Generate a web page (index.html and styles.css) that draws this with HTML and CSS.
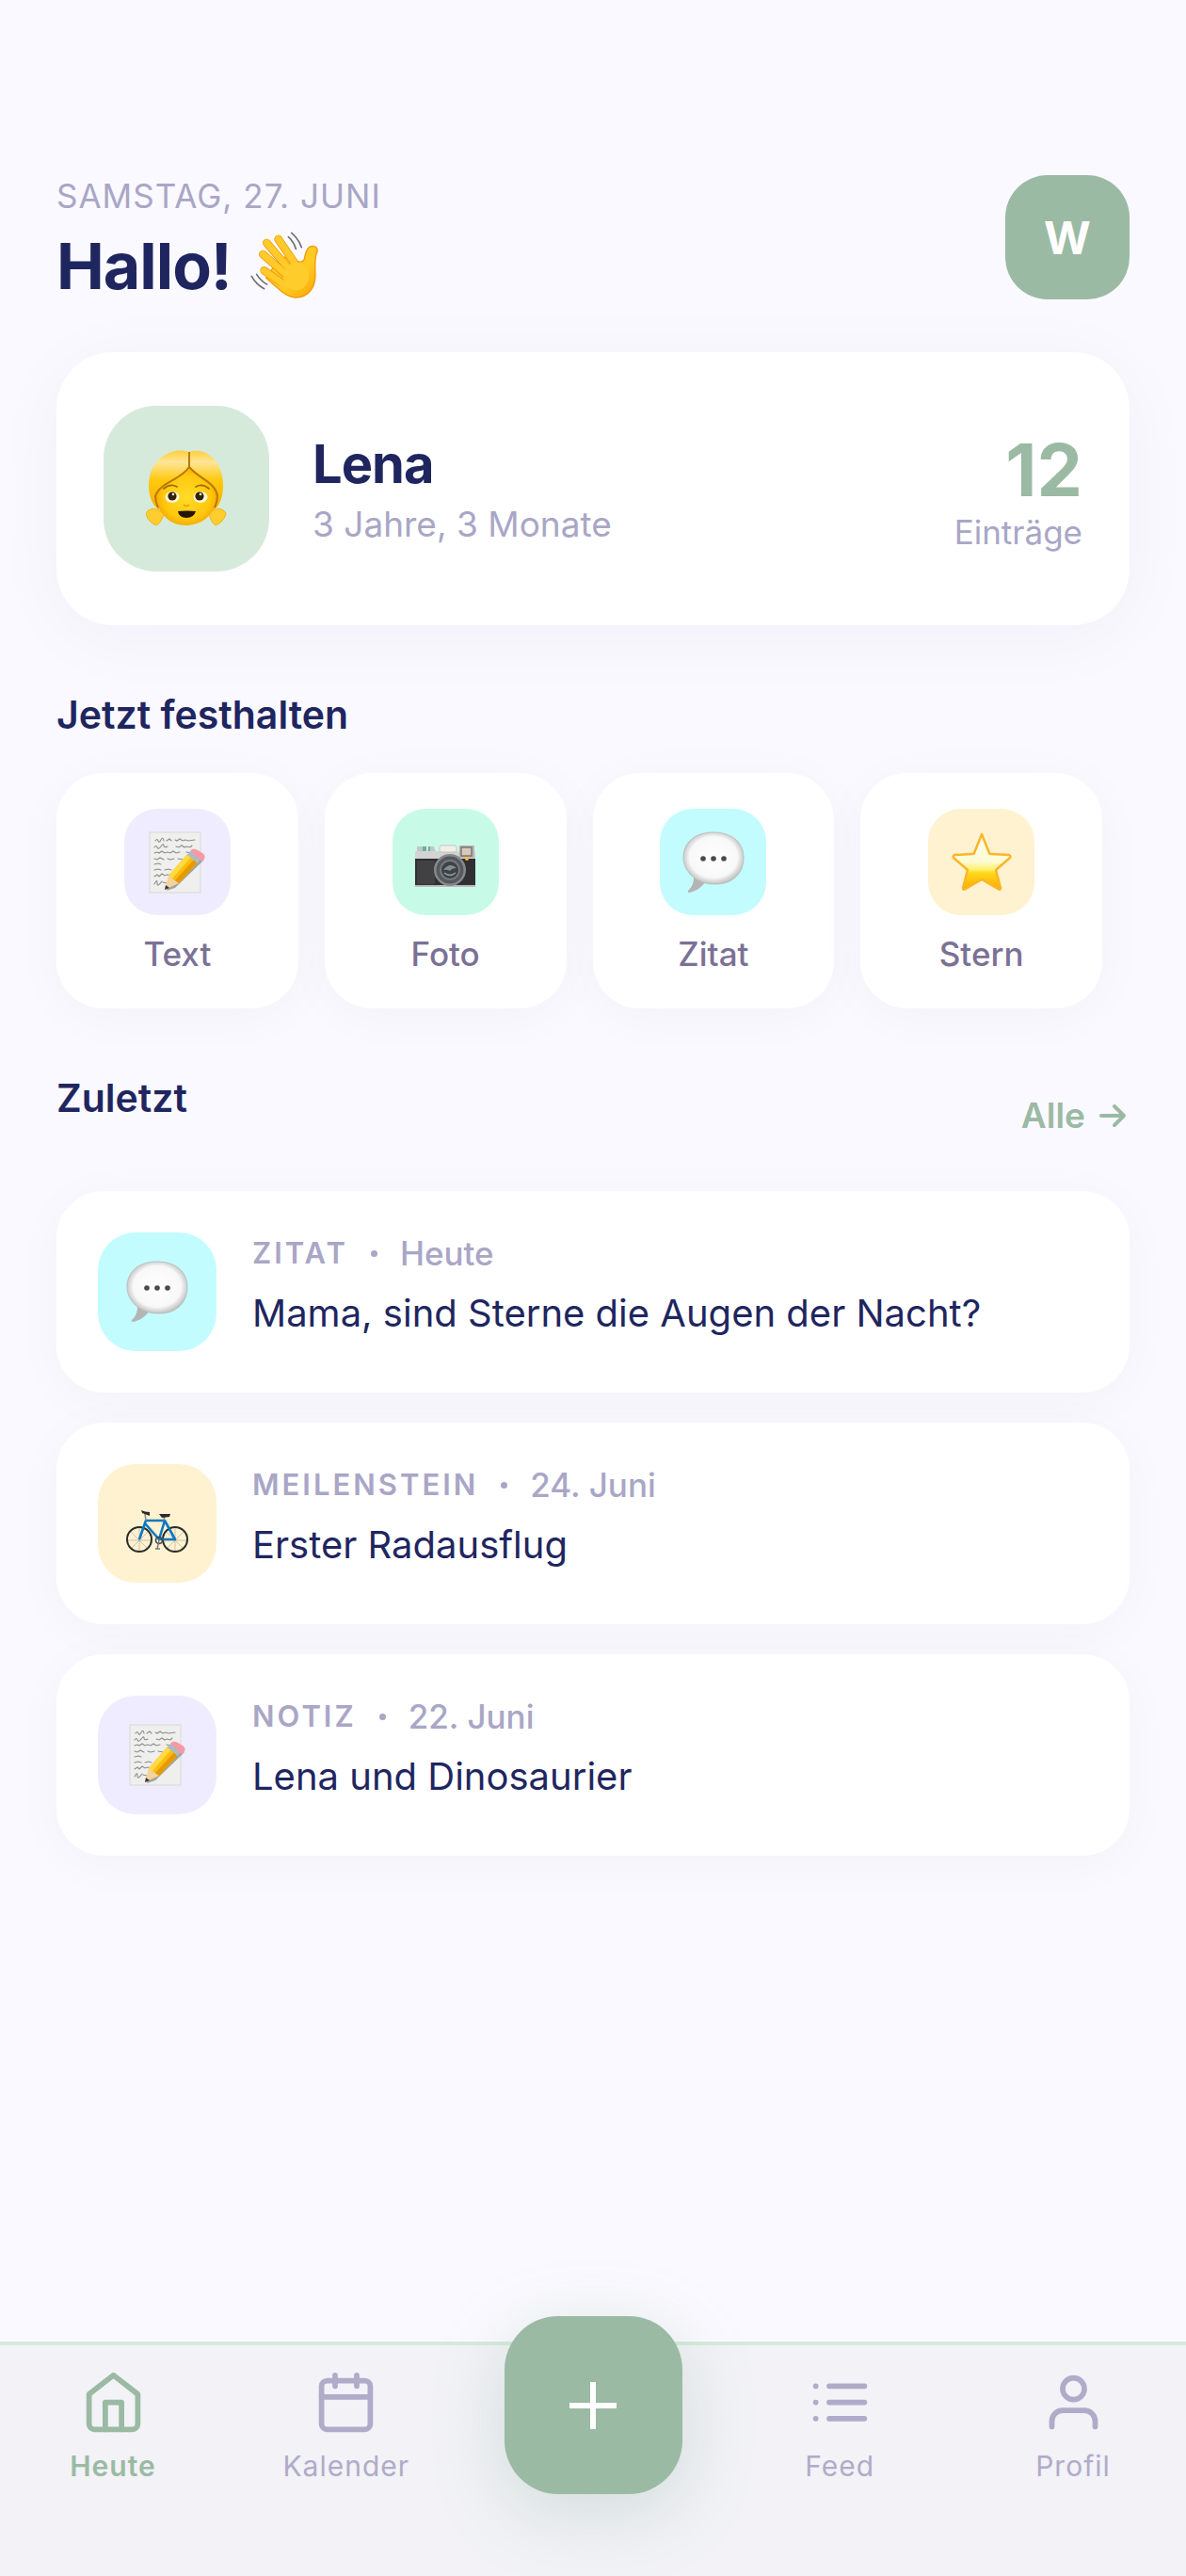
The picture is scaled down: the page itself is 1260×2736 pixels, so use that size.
FILE: index.html
```
<!DOCTYPE html>
<html lang="de">
<head>
    <meta charset="UTF-8">
    <meta name="viewport" content="width=device-width, initial-scale=1.0">
    <title>Heute</title>
    <link rel="stylesheet" href="styles.css">
</head>
<body>
    <!-- Symbole, die mehrfach verwendet werden -->
    <svg class="sprite" aria-hidden="true">
        <defs>
            <linearGradient id="gelb" x1="0" y1="0" x2="1" y2="1">
                <stop offset="0" stop-color="#ffd02e"/>
                <stop offset="0.6" stop-color="#ffc921"/>
                <stop offset="1" stop-color="#fba405"/>
            </linearGradient>
            <linearGradient id="haar" x1="0" y1="0" x2="0" y2="1">
                <stop offset="0" stop-color="#ffcf3a"/>
                <stop offset="0.2" stop-color="#ffe597"/>
                <stop offset="0.5" stop-color="#ffc90f"/>
                <stop offset="1" stop-color="#f5ae00"/>
            </linearGradient>
            <radialGradient id="gesicht" cx="0.5" cy="0.5" r="0.55">
                <stop offset="0" stop-color="#ffdc2a"/>
                <stop offset="0.7" stop-color="#ffc80d"/>
                <stop offset="1" stop-color="#f3a300"/>
            </radialGradient>
            <radialGradient id="blase" cx="0.5" cy="0.48" r="0.53">
                <stop offset="0" stop-color="#ffffff"/>
                <stop offset="0.75" stop-color="#f8f8f8"/>
                <stop offset="1" stop-color="#bdbdbd"/>
            </radialGradient>
            <linearGradient id="stern" x1="0" y1="0" x2="0" y2="1">
                <stop offset="0" stop-color="#fffdf0"/>
                <stop offset="0.5" stop-color="#fffbd2"/>
                <stop offset="0.64" stop-color="#fff06a"/>
                <stop offset="0.7" stop-color="#ffd91a"/>
                <stop offset="1" stop-color="#ffa800"/>
            </linearGradient>
        </defs>
        <symbol id="notiz" viewBox="0 0 66 66">
            <rect x="4" y="1" width="54" height="64" fill="#efefed" stroke="#d8d8d6" stroke-width="1"/>
            <g fill="none" stroke="#8c8c8f" stroke-width="1.1" stroke-linecap="round">
                <path d="M10 10q2-3 3 0t3-1 3 1M22 10l3-2 2 2M31 9l2 1 3-2 3 2 3-1 3 1 7-1"/>
                <path d="M9 17q2-3 3 0t4-1 3-1 4 1M32 16l3 1 3-2 3 2 2-1 4 1 2-2"/>
                <path d="M9 23l3-1 2 1 3-2 3 2 3-1 3 1 3-2 3 2 4-1M43 22l4 1"/>
                <path d="M9 29l3 1 3-2 4 2M23 29l3 1 4-1M34 29l6 1"/>
                <path d="M9 35l4-1 3 1"/>
                <path d="M9 41l4-1 3 1M20 41l4-1 3 1M32 40l3 1"/>
                <path d="M9 48l3-2 2 2 3-3 3 2 3-1 5 1"/>
                <path d="M9 56q3-6 3-1t5-2M18 54l4 1"/>
            </g>
            <path d="M22 63l9-3 31-30-4-4-34 28z" fill="#444" opacity="0.45"/>
            <path d="M20 62l4-15 11 8z" fill="#f5d39c"/>
            <path d="M20 62l1-5 4 3z" fill="#35353a"/>
            <path d="M24 47l20-23 11 9-20 22z" fill="#fdbd0c"/>
            <path d="M24 47l20-23 4 3-20 23z" fill="#ffda45"/>
            <path d="M31 52l20-22 4 3-20 22z" fill="#e79a00"/>
            <path d="M44 25l3-4 12 8-4 5z" fill="#a9bdc9"/>
            <path d="M47 21l2-2q3-1 6 1l5 3q4 3 2 6l-3 3z" fill="#f59aa3"/>
        </symbol>
        <symbol id="zitat" viewBox="0 0 66 66">
            <path d="M12 46Q13 57 6 63Q5 65 8 65Q19 62 25 53z" fill="#b4b4b4"/>
            <path d="M33 1C52 1 65 11 65 28S53 56 36 56C31 56 28 56 25 55C20 54 11 50 7 44C3 39 1 34 1 28C1 11 14 1 33 1z" fill="url(#blase)" stroke="#b9b9b9" stroke-width="0.8"/>
            <g fill="#4a4a4a">
                <circle cx="22" cy="29" r="2.8"/>
                <circle cx="33" cy="29" r="2.8"/>
                <circle cx="44" cy="29" r="2.8"/>
            </g>
        </symbol>
    </svg>

    <main class="inhalt">
        <header class="kopf">
            <div>
                <p class="datum">SAMSTAG, 27. JUNI</p>
                <h1 class="hallo">Hallo!
                    <svg class="winken" viewBox="0 0 216 216" role="img" aria-label="Winkende Hand">
                        <g fill="none" stroke="#707070" stroke-width="5" stroke-linecap="round">
                            <path d="M131 4q22 18 32 46M121 17q17 14 24 38M4 142q14 26 40 40M20 136q14 22 33 32"/>
                        </g>
                        <path d="M96 80L138 86Q164 106 172 88C176 60 184 46 198 46C211 46 216 56 212 66C203 90 207 110 207 142C206 184 180 211 142 210C120 209 104 196 88 181L50 148z" fill="url(#gelb)" stroke="#f29a06" stroke-width="4" stroke-linejoin="round"/>
                        <g fill="none" stroke-linecap="round">
                            <path d="M89 24L142 102" stroke="#f19a0b" stroke-width="26"/>
                            <path d="M89 24L146 108" stroke="#ffcb2a" stroke-width="21"/>
                            <path d="M52 36L122 118" stroke="#f19a0b" stroke-width="26"/>
                            <path d="M52 36L128 124" stroke="#ffcb2a" stroke-width="21"/>
                            <path d="M40 72L110 134" stroke="#f19a0b" stroke-width="26"/>
                            <path d="M40 72L118 140" stroke="#ffcb2a" stroke-width="21"/>
                            <path d="M44 124L96 160" stroke="#f19a0b" stroke-width="26"/>
                            <path d="M44 124L112 172" stroke="#ffcb2a" stroke-width="21"/>
                        </g>
                        <ellipse cx="146" cy="142" rx="40" ry="44" fill="#ffcd2b"/>
                    </svg>
                </h1>
            </div>
            <button class="avatar" type="button">W</button>
        </header>

        <section class="kind">
            <div class="kind-bild">
                <svg viewBox="0 0 86 82" role="img" aria-label="Mädchen">
                    <path d="M8 62Q0 64 0 68Q3 77 11 80Q18 76 19 66z" fill="#ffce2e" stroke="#eda900" stroke-width="0.8"/>
                    <path d="M77 62Q85 64 85 68Q82 77 74 80Q68 76 67 66z" fill="#ffce2e" stroke="#eda900" stroke-width="0.8"/>
                    <path d="M46 2C60-3 82 7 82 38C82 49 79 58 73 63L13 63C6 57 3 48 3 38C3 7 30-4 46 2z" fill="url(#haar)"/>
                    <path d="M46 20C58 30 74 34 76 49C75 66 61 80 43 80S12 67 11 49C12 35 35 33 46 20z" fill="url(#gesicht)"/>
                    <path d="M46 2V18C37 32 15 34 10 49Q10 55 13 61M46 18C57 31 74 34 76 49Q76 55 73 61" fill="none" stroke="#b97900" stroke-width="2"/>
                    <path d="M19 41q7-6 14-2M53 39q7-4 14 2" fill="none" stroke="#a36a00" stroke-width="1.8" stroke-linecap="round"/>
                    <ellipse cx="28" cy="50" rx="7.5" ry="6" fill="#fff7dc"/>
                    <ellipse cx="58" cy="50" rx="7.5" ry="6" fill="#fff7dc"/>
                    <circle cx="28" cy="49" r="4.6" fill="#332000"/>
                    <circle cx="57" cy="49" r="4.6" fill="#332000"/>
                    <circle cx="29" cy="47" r="1.3" fill="#fff"/>
                    <circle cx="58" cy="47" r="1.3" fill="#fff"/>
                    <path d="M40 58q3 3 6 0" fill="none" stroke="#e89c00" stroke-width="1.5"/>
                    <path d="M34 65Q43 64 53 65Q51 72 43 72T34 65z" fill="#251500"/>
                </svg>
            </div>
            <div class="kind-text">
                <h2>Lena</h2>
                <p>3 Jahre, 3 Monate</p>
            </div>
            <div class="kind-zahl">
                <strong>12</strong>
                <span>Einträge</span>
            </div>
        </section>

        <h2 class="titel">Jetzt festhalten</h2>
        <div class="schnell">
            <button class="schnell-karte" type="button">
                <span class="symbol lila"><svg aria-hidden="true"><use href="#notiz"/></svg></span>
                Text
            </button>
            <button class="schnell-karte" type="button">
                <span class="symbol mint">
                    <svg viewBox="0 0 66 66" aria-hidden="true">
                        <path d="M3 22V16h9v6zM14 22l1-6h6l2 6z" fill="#c3c6c6"/>
                        <path d="M9 16h4v5H9zM15 16h2v5h-2z" fill="#6fae97"/>
                        <rect x="1" y="21" width="64" height="9" rx="1" fill="#d2d4d4"/>
                        <rect x="27" y="15" width="18" height="7" rx="2" fill="#f3efe6" stroke="#bbb" stroke-width="0.8"/>
                        <rect x="1" y="29" width="64" height="29" fill="#303033"/>
                        <rect x="3" y="31" width="19" height="25" fill="#414144"/>
                        <path d="M1 57h64v2H1z" fill="#b9b9bb"/>
                        <rect x="48" y="15" width="16" height="13" fill="#b5b5b5"/>
                        <rect x="50" y="17" width="11" height="9" fill="#d7c8c0" stroke="#74615b" stroke-width="1.2"/>
                        <circle cx="38" cy="41" r="17" fill="#85898d"/>
                        <circle cx="38" cy="41" r="14.5" fill="#55595d"/>
                        <circle cx="38" cy="41" r="11" fill="#73797d"/>
                        <circle cx="38" cy="41" r="9" fill="#3c4246"/>
                        <path d="M31 41q7-9 14-2-5 0-7 3-3-2-7-1z" fill="#858d91"/>
                        <path d="M32 44q6 5 12 0" fill="none" stroke="#9ba2a6" stroke-width="1.3"/>
                        <circle cx="56" cy="29" r="2" fill="#ffc52b"/>
                    </svg>
                </span>
                Foto
            </button>
            <button class="schnell-karte" type="button">
                <span class="symbol cyan"><svg aria-hidden="true"><use href="#zitat"/></svg></span>
                Zitat
            </button>
            <button class="schnell-karte" type="button">
                <span class="symbol gelb">
                    <svg viewBox="0 0 66 66" aria-hidden="true">
                        <path d="M33 3L41 23Q41 24 43 24L62 25Q64 26 63 28L48 41L53 60Q53 63 50 61L33 51L16 61Q13 63 13 60L18 41L3 28Q2 26 4 25L23 24Q25 24 25 23z" fill="url(#stern)" stroke="#fbb52a" stroke-width="2.5" stroke-linejoin="round"/>
                    </svg>
                </span>
                Stern
            </button>
        </div>

        <div class="titel-zeile">
            <h2 class="titel">Zuletzt</h2>
            <a class="alle" href="#">Alle
                <svg viewBox="0 0 30 26" aria-hidden="true"><path d="M3 13h24M17 3l10 10-10 10"/></svg>
            </a>
        </div>
        <div class="liste">
            <article class="eintrag">
                <span class="symbol gross cyan"><svg aria-hidden="true"><use href="#zitat"/></svg></span>
                <div>
                    <p class="meta"><b>ZITAT</b><i class="punkt"></i><span>Heute</span></p>
                    <h3>Mama, sind Sterne die Augen der Nacht?</h3>
                </div>
            </article>
            <article class="eintrag">
                <span class="symbol gross gelb">
                    <svg viewBox="0 0 66 66" aria-hidden="true">
                        <g fill="none" stroke="#a8a293" stroke-width="0.6">
                            <path d="M14 38v26M1 51h26M5 42l18 18M23 42L5 60M52 38v26M39 51h26M43 42l18 18M61 42L43 60"/>
                        </g>
                        <g fill="none" stroke="#2c2c2c" stroke-width="2">
                            <circle cx="14" cy="50" r="13"/>
                            <circle cx="52" cy="50" r="13"/>
                        </g>
                        <path d="M14 50l7-20h20l-6 20-15-17M35 50h17L41 30" fill="none" stroke="#0878c4" stroke-width="2.6" stroke-linejoin="round"/>
                        <path d="M21 30l-1-7M40 30l1-6" stroke="#8b8b8b" stroke-width="1.6"/>
                        <path d="M16 19q4 2 9 2v4l-8-3zM35 23h12l-1 3-8 1z" fill="#2b2b2b"/>
                        <circle cx="35" cy="51" r="3.5" fill="none" stroke="#444" stroke-width="1.6"/>
                        <path d="M35 51l-2 9M31 60h5" stroke="#777" stroke-width="1.4"/>
                    </svg>
                </span>
                <div>
                    <p class="meta"><b>MEILENSTEIN</b><i class="punkt"></i><span>24. Juni</span></p>
                    <h3>Erster Radausflug</h3>
                </div>
            </article>
            <article class="eintrag">
                <span class="symbol gross lila"><svg aria-hidden="true"><use href="#notiz"/></svg></span>
                <div>
                    <p class="meta"><b>NOTIZ</b><i class="punkt"></i><span>22. Juni</span></p>
                    <h3>Lena und Dinosaurier</h3>
                </div>
            </article>
        </div>
    </main>

    <nav class="leiste">
        <a class="tab aktiv" href="#">
            <svg viewBox="0 0 24 24" aria-hidden="true"><path d="M3 9l9-7 9 7v11a2 2 0 0 1-2 2H5a2 2 0 0 1-2-2z"/><path d="M9 22V12h6v10"/></svg>
            Heute
        </a>
        <a class="tab" href="#">
            <svg viewBox="0 0 24 24" aria-hidden="true"><rect x="3" y="4" width="18" height="18" rx="2"/><path d="M16 2v4M8 2v4M3 10h18"/></svg>
            Kalender
        </a>
        <button class="plus" type="button" aria-label="Neuer Eintrag">
            <svg viewBox="0 0 50 50" aria-hidden="true"><path d="M25 0v50M0 25h50"/></svg>
        </button>
        <a class="tab" href="#">
            <svg viewBox="0 0 24 24" aria-hidden="true"><path d="M8 6h13M8 12h13M8 18h13M3 6h.01M3 12h.01M3 18h.01"/></svg>
            Feed
        </a>
        <a class="tab" href="#">
            <svg viewBox="0 0 24 24" aria-hidden="true"><path d="M20 21v-2a4 4 0 0 0-4-4H8a4 4 0 0 0-4 4v2"/><circle cx="12" cy="7" r="4"/></svg>
            Profil
        </a>
    </nav>
</body>
</html>
```
FILE: styles.css
```
* {
    box-sizing: border-box;
}
body {
    margin: 0;
    min-height: 100vh;
    display: flex;
    flex-direction: column;
    font-family: Inter, "Liberation Sans", sans-serif;
    background-color: #faf9ff;
    color: #1f265f;
}
h1, h2, h3, p {
    margin: 0;
}
button {
    font-family: inherit;
    border: none;
    padding: 0;
}
a {
    text-decoration: none;
}
.sprite {
    position: absolute;
    width: 0;
    height: 0;
}
.inhalt {
    flex: 1;
    padding: 186px 60px 60px;
}

/* Kopfzeile */
.kopf {
    display: flex;
    justify-content: space-between;
    align-items: flex-start;
    margin-bottom: 52px;
}
.datum {
    font-size: 35px;
    line-height: 44px;
    letter-spacing: 1px;
    color: #a9a6c6;
    margin-bottom: 12px;
}
.hallo {
    display: flex;
    align-items: center;
    gap: 20px;
    font-size: 68px;
    line-height: 80px;
    letter-spacing: -1px;
    font-weight: 700;
}
.winken {
    width: 72px;
    height: 72px;
}
.avatar {
    width: 132px;
    height: 132px;
    border-radius: 45px;
    background-color: #9bbaa3;
    color: #fff;
    font-size: 48px;
    font-weight: 700;
}

/* Karte des Kindes */
.kind {
    display: flex;
    align-items: center;
    gap: 46px;
    padding: 57px 50px;
    border-radius: 60px;
    background-color: #fff;
    box-shadow: 0 12px 80px rgba(31, 38, 95, 0.04);
}
.kind-bild {
    display: flex;
    align-items: center;
    justify-content: center;
    width: 176px;
    height: 176px;
    border-radius: 56px;
    background-color: #d6eadc;
}
.kind-bild svg {
    width: 86px;
    height: 82px;
}
.kind-text {
    flex: 1;
}
.kind-text h2 {
    font-size: 56px;
    line-height: 70px;
    font-weight: 700;
    letter-spacing: -1px;
}
.kind-text p {
    margin-top: 6px;
    font-size: 37px;
    line-height: 46px;
    color: #a9a6c6;
}
.kind-zahl {
    display: flex;
    flex-direction: column;
    align-items: flex-end;
    padding-top: 4px;
}
.kind-zahl strong {
    font-size: 77px;
    line-height: 88px;
    color: #9bbaa3;
}
.kind-zahl span {
    font-size: 35px;
    line-height: 44px;
    color: #a9a6c6;
}

.titel {
    margin: 71px 0 38px;
    font-size: 41px;
    line-height: 48px;
    font-weight: 600;
}

/* Schnellauswahl */
.schnell {
    display: grid;
    grid-template-columns: repeat(4, 1fr);
    gap: 28px;
    padding-right: 29px;
}
.schnell-karte {
    display: flex;
    flex-direction: column;
    align-items: center;
    gap: 19px;
    padding: 38px 0 36px;
    border-radius: 50px;
    background-color: #fff;
    box-shadow: 0 8px 56px rgba(31, 38, 95, 0.03);
    color: #7b7196;
    font-size: 35px;
    line-height: 44px;
    font-weight: 500;
}
.symbol {
    display: flex;
    align-items: center;
    justify-content: center;
    flex: none;
    width: 113px;
    height: 113px;
    border-radius: 35px;
}
.symbol svg {
    width: 66px;
    height: 66px;
}
.gross {
    width: 126px;
    height: 126px;
    border-radius: 40px;
}
.lila {
    background-color: #f0ecff;
}
.mint {
    background-color: #c7fbe8;
}
.cyan {
    background-color: #c2fcff;
}
.gelb {
    background-color: #fff2d0;
}

/* Letzte Einträge */
.titel-zeile {
    display: flex;
    justify-content: space-between;
    align-items: center;
    margin: 71px 0 37px;
}
.titel-zeile .titel {
    margin-top: 0;
}
.alle {
    display: flex;
    align-items: center;
    gap: 14px;
    padding-right: 3px;
    font-size: 37px;
    line-height: 48px;
    font-weight: 600;
    color: #9bbaa3;
}
.alle svg {
    width: 30px;
    height: 26px;
    fill: none;
    stroke: currentColor;
    stroke-width: 4;
    stroke-linecap: round;
    stroke-linejoin: round;
}
.liste {
    display: flex;
    flex-direction: column;
    gap: 32px;
}
.eintrag {
    display: flex;
    gap: 38px;
    padding: 44px;
    border-radius: 50px;
    background-color: #fff;
    box-shadow: 0 8px 56px rgba(31, 38, 95, 0.03);
}
.meta {
    display: flex;
    align-items: center;
    gap: 24px;
    margin-bottom: 12px;
    font-size: 35px;
    line-height: 44px;
    font-weight: 500;
    color: #a9a6c6;
}
.meta b {
    font-size: 31px;
    font-weight: 600;
    letter-spacing: 3px;
}
.punkt {
    width: 7px;
    height: 7px;
    border-radius: 50%;
    background-color: #a9a6c6;
}
.eintrag h3 {
    font-size: 40px;
    line-height: 60px;
    font-weight: 400;
}

/* Untere Leiste */
.leiste {
    display: flex;
    justify-content: space-between;
    align-items: flex-start;
    padding: 26px 40px 87px;
    border-top: 4px solid #d5eadb;
    background-color: #f2f2f7;
}
.tab {
    display: flex;
    flex-direction: column;
    align-items: center;
    gap: 13px;
    width: 160px;
    font-size: 30px;
    line-height: 40px;
    letter-spacing: 1px;
    color: #b0abc8;
}
.tab svg {
    width: 69px;
    height: 69px;
    fill: none;
    stroke: currentColor;
    stroke-width: 2;
    stroke-linecap: round;
    stroke-linejoin: round;
}
.aktiv {
    color: #9bbaa3;
    font-weight: 600;
}
.plus {
    display: flex;
    align-items: center;
    justify-content: center;
    width: 189px;
    height: 189px;
    margin-top: -57px;
    border-radius: 57px;
    background-color: #9bbaa3;
    box-shadow: 0 18px 75px rgba(125, 165, 137, 0.28);
}
.plus svg {
    width: 50px;
    height: 50px;
    stroke: #fff;
    stroke-width: 6;
}
```
